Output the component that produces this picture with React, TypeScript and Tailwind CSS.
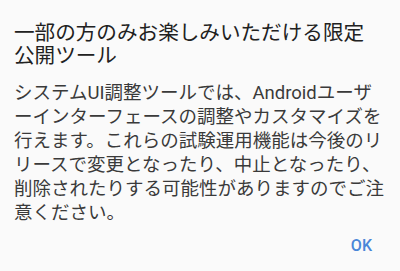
export default function App() {
  return (
    <div
      className="w-[400px] h-[271px] bg-[#fafafa] overflow-hidden flex flex-col [line-break:loose]"
      lang="ja"
      style={{ fontFamily: 'Roboto, "Noto Sans CJK JP", sans-serif' }}
    >
      <div className="pt-[22px] pl-[14px] pr-[26px] text-[20.6px] [line-height:23px] text-[#212121]">
        一部の方のみお楽しみいただける限定公開ツール
      </div>
      <div className="mt-[13px] px-[14px] text-[18.5px] [line-height:24px] text-[#3a3a3a]">
        システムUI調整ツールでは、Androidユーザーインターフェースの調整やカスタマイズを行えます。これらの試験運用機能は今後のリリースで変更となったり、中止となったり、削除されたりする可能性がありますのでご注意ください。
      </div>
      <div className="flex justify-end pr-[28px] mt-[9px]">
        <span className="text-[16px] [line-height:24px] font-medium text-[#4a86d8]">OK</span>
      </div>
    </div>
  );
}
